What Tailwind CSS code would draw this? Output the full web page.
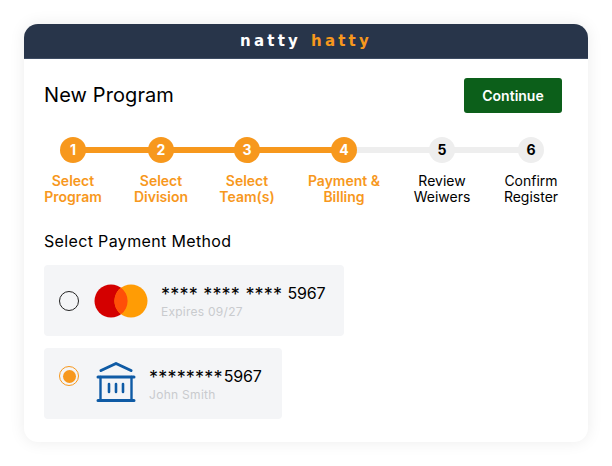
<!DOCTYPE html>
<html lang="en">
<head>
  <meta charset="UTF-8" />
  <title>New Program</title>
  <script src="https://cdn.jsdelivr.net/npm/@tailwindcss/browser@4"></script>
</head>
<body class="bg-white font-['Inter',sans-serif]">
  <div class="p-6 w-[612px] h-[466px]">
    <div class="bg-white rounded-[14px] shadow-[0_0_16px_rgba(0,0,0,0.08)] h-[418px] overflow-hidden">

      <!-- logo bar -->
      <div class="h-[35px] bg-[#28354a] flex items-center justify-center gap-[10px] font-['DejaVu_Sans',sans-serif] font-bold text-[15px] tracking-[3.2px] border-b border-[#3e4c63]">
        <span class="text-white">natty</span>
        <span class="text-[#f7981d]">hatty</span>
      </div>

      <div class="px-5 pt-[19px]">
        <div class="flex items-center justify-between pr-1.5">
          <h1 class="text-[20px] leading-[35px] tracking-[0.1px] text-black">New Program</h1>
          <button class="w-[98px] h-[35px] rounded-[3px] bg-[#0c5f1a] text-white text-[14px] font-semibold">Continue</button>
        </div>

        <!-- stepper -->
        <div class="relative flex gap-x-8 mt-[24px] w-[515px] text-[14px] leading-4 text-center">
          <div class="absolute left-[29px] top-[10px] w-[271px] h-[6px] bg-[#f7981d]"></div>
          <div class="absolute left-[300px] top-[10px] w-[187px] h-[6px] bg-[#eeeeee]"></div>

          <div class="relative w-[58px] flex flex-col items-center text-[#f7981d] font-semibold">
            <span class="w-[26px] h-[26px] rounded-full bg-[#f7981d] text-white text-[14px] font-bold flex items-center justify-center">1</span>
            <span class="mt-[10px]">Select<br />Program</span>
          </div>
          <div class="relative w-[54px] flex flex-col items-center text-[#f7981d] font-semibold">
            <span class="w-[26px] h-[26px] rounded-full bg-[#f7981d] text-white text-[14px] font-bold flex items-center justify-center">2</span>
            <span class="mt-[10px]">Select<br />Division</span>
          </div>
          <div class="relative w-[54px] flex flex-col items-center text-[#f7981d] font-semibold">
            <span class="w-[26px] h-[26px] rounded-full bg-[#f7981d] text-white text-[14px] font-bold flex items-center justify-center">3</span>
            <span class="mt-[10px]">Select<br />Team(s)</span>
          </div>
          <div class="relative ml-px w-[74px] flex flex-col items-center text-[#f7981d] font-semibold">
            <span class="w-[26px] h-[26px] rounded-full bg-[#f7981d] text-white text-[14px] font-bold flex items-center justify-center">4</span>
            <span class="mt-[10px] whitespace-nowrap">Payment &amp;<br />Billing</span>
          </div>
          <div class="relative ml-px w-[56px] flex flex-col items-center text-black">
            <span class="w-[26px] h-[26px] rounded-full bg-[#eeeeee] text-black text-[14px] font-bold flex items-center justify-center">5</span>
            <span class="mt-[10px]">Review<br />Weiwers</span>
          </div>
          <div class="relative ml-px w-[56px] flex flex-col items-center text-black">
            <span class="w-[26px] h-[26px] rounded-full bg-[#eeeeee] text-black text-[14px] font-bold flex items-center justify-center">6</span>
            <span class="mt-[10px]">Confirm<br />Register</span>
          </div>
        </div>

        <h2 class="mt-[26px] text-[16px] leading-5 tracking-[0.35px] text-black">Select Payment Method</h2>

        <!-- card option -->
        <div class="mt-[14px] w-[300px] h-[71px] rounded-[4px] bg-[#f4f5f7] flex items-center pl-[15px]">
          <span class="w-5 h-5 rounded-full border-[1.5px] border-[#222222]"></span>
          <svg class="ml-[15px]" width="54" height="34" viewBox="0 0 54 34">
            <circle cx="17" cy="17" r="16.5" fill="#d40000" />
            <circle cx="37" cy="17" r="16.5" fill="#ff9c05" />
            <path d="M27 3.8a16.5 16.5 0 0 1 0 26.4a16.5 16.5 0 0 1 0-26.4z" fill="#ff4f08" />
          </svg>
          <div class="ml-[13px] mt-[1px]">
            <div class="text-[16px] leading-5 text-black whitespace-nowrap [word-spacing:0.8px]"><span class="text-[18px] leading-none tracking-[0.2px] align-[-2px]">****</span> <span class="text-[18px] leading-none tracking-[0.2px] align-[-2px]">****</span> <span class="text-[18px] leading-none tracking-[0.2px] align-[-2px]">****</span> <span class="tracking-[-0.2px]">5967</span></div>
            <div class="text-[12px] leading-4 tracking-[0.25px] text-[#c9cbce]">Expires 09/27</div>
          </div>
        </div>

        <!-- bank option -->
        <div class="mt-3 w-[238px] h-[71px] rounded-[4px] bg-[#f4f5f7] flex pl-[15px] pt-[18px]">
          <span class="w-5 h-5 rounded-full border-[1.5px] border-[#f7981d] flex items-center justify-center">
            <span class="w-[13px] h-[13px] rounded-full bg-[#f7981d]"></span>
          </span>
          <svg class="ml-[17px] -mt-[4px]" width="40" height="40" viewBox="0 0 40 40" fill="none" stroke="#0f5ba5" stroke-linecap="round" stroke-linejoin="round">
            <path d="M5 8.5L20 1.5L35 8.5" stroke-width="3" />
            <path d="M2 15H38M2 38.5H38" stroke-width="3" />
            <path d="M4.5 15V38.5M35.5 15V38.5" stroke-width="2.4" />
            <path d="M13 22V30M20 22V30M27 22V30" stroke-width="2.6" />
          </svg>
          <div class="ml-[13px]">
            <div class="text-[16px] leading-5 text-black"><span class="text-[18px] leading-none tracking-[0.2px] align-[-2px]">********</span><span class="ml-px tracking-[-0.2px]">5967</span></div>
            <div class="text-[12px] leading-4 tracking-[0.3px] text-[#c9cbce]">John Smith</div>
          </div>
        </div>
      </div>
    </div>
  </div>
</body>
</html>
